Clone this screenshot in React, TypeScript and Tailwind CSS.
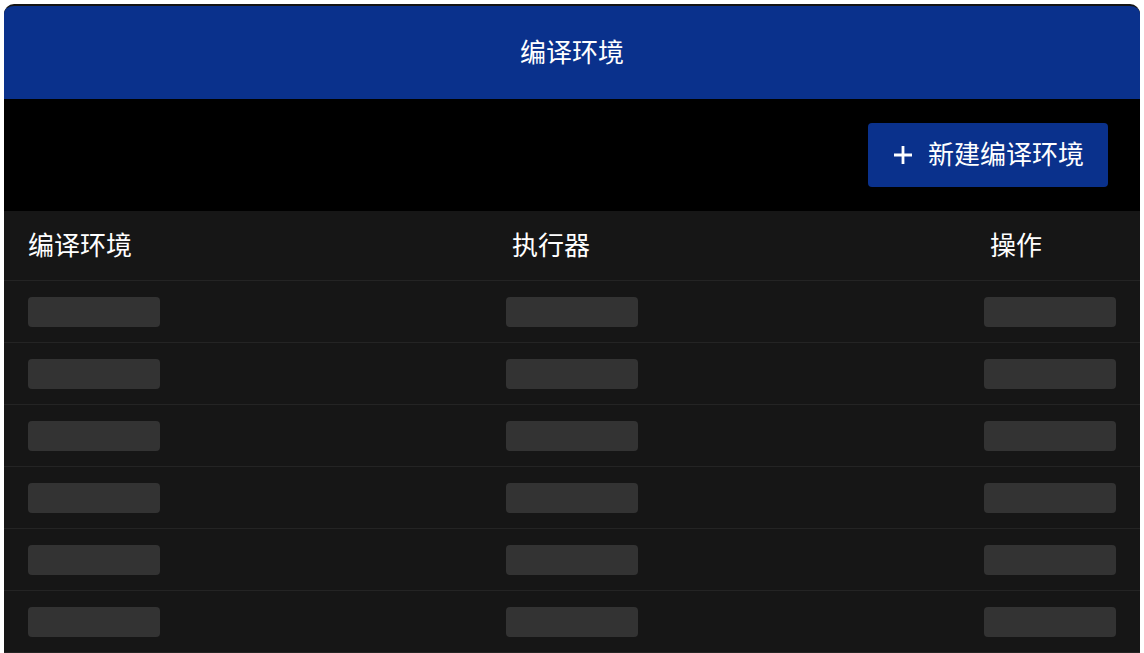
const rows = [1, 2, 3, 4, 5, 6, 7];

const Skeleton = () => (
  <div className="w-[132px] h-[30px] rounded-[4px] bg-[#333333]"></div>
);

const App = () => {
  return (
    <div
      className="w-full h-[653px] overflow-hidden bg-white pt-[4px] px-[4px]"
      style={{ fontFamily: '"Noto Sans CJK SC", "Noto Sans", sans-serif' }}
    >
      <div className="h-full rounded-t-[10px] border-t-2 border-[#141414] overflow-hidden bg-[#161616] text-white">
        <div className="h-[93px] bg-[#0a318c] flex items-center justify-center">
          <span className="text-[26px] leading-none pb-[3px]">编译环境</span>
        </div>
        <div className="h-[112px] bg-black flex items-center justify-end pr-[32px]">
          <button className="h-[64px] w-[240px] rounded-[4px] bg-[#0a318c] flex items-center pl-[25px] gap-[15px]">
            <svg width="20" height="20" viewBox="0 0 20 20" className="shrink-0">
              <path
                d="M10 1v18M1 10h18"
                stroke="white"
                strokeWidth="2.8"
                fill="none"
              />
            </svg>
            <span className="text-[26px] leading-none pb-[4px]">新建编译环境</span>
          </button>
        </div>
        <div className="grid grid-cols-[478px_478px_1fr] h-[70px] items-center border-b border-[#242424] pb-[3px]">
          <div className="pl-[24px] text-[26px] leading-none">编译环境</div>
          <div className="pl-[30px] text-[26px] leading-none">执行器</div>
          <div className="pl-[30px] text-[26px] leading-none">操作</div>
        </div>
        {rows.map((r) => (
          <div
            key={r}
            className="grid grid-cols-[478px_478px_1fr] h-[62px] items-start pt-[16px] border-b border-[#242424]"
          >
            <div className="pl-[24px]">
              <Skeleton />
            </div>
            <div className="pl-[24px]">
              <Skeleton />
            </div>
            <div className="pl-[24px]">
              <Skeleton />
            </div>
          </div>
        ))}
      </div>
    </div>
  );
};

export default App;
